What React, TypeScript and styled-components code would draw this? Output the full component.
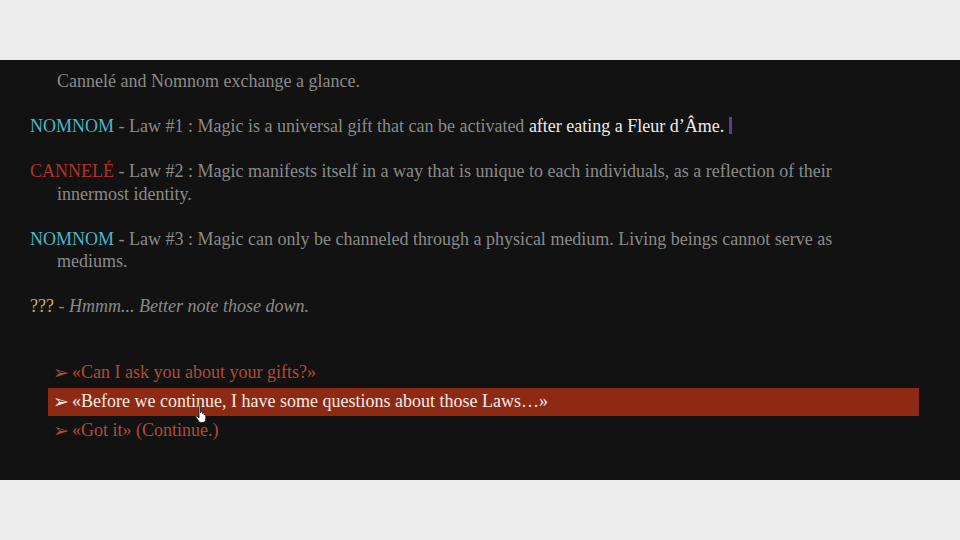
import React from 'react'
import styled, { createGlobalStyle } from 'styled-components'

const GlobalStyle = createGlobalStyle`
  html, body {
    margin: 0;
    padding: 0;
    background: #ececec;
  }
  body {
    font-family: "Liberation Serif", "DejaVu Serif", serif;
  }
`

const Stage = styled.div`
  margin-top: 60px;
  height: 420px;
  background: #121212;
  position: relative;
  overflow: hidden;
`

const Transcript = styled.div`
  padding: 10px 0 0 30px;
  width: 830px;
  font-size: 18px;
  line-height: 22.5px;
  color: #8a8a8a;
`

const Para = styled.p<{ $narration?: boolean }>`
  margin: 0 0 22.5px 0;
  padding-left: 27px;
  text-indent: ${(p) => (p.$narration ? '0' : '-27px')};
`

const Speaker = styled.span<{ $color: string }>`
  color: ${(p) => p.$color};
`

const Fresh = styled.span`
  color: #ececec;
`

const Caret = styled.span`
  display: inline-block;
  width: 3px;
  height: 17px;
  margin-left: 5px;
  vertical-align: -2px;
  background: #5f3a8e;
`

const Aside = styled.em`
  font-style: italic;
`

const Choices = styled.ul`
  list-style: none;
  margin: 41px 0 0 48px;
  padding: 0;
  width: 871px;
  display: flex;
  flex-direction: column;
  gap: 1px;
`

const Choice = styled.li<{ $active?: boolean }>`
  height: 28px;
  display: flex;
  align-items: center;
  padding-left: 5px;
  font-size: 18px;
  color: ${(p) => (p.$active ? '#f3ece6' : '#b04c36')};
  background: ${(p) => (p.$active ? '#8e2a14' : 'transparent')};
`

const Arrow = styled.span`
  font-family: "DejaVu Sans", sans-serif;
  font-size: 19px;
  line-height: 1;
  width: 19px;
`

const Pointer = styled.svg`
  position: absolute;
  left: 195px;
  top: 344px;
`

const dialogue = [
  { speaker: 'NOMNOM', color: '#4db6c6', text: ' - Law #1 : Magic is a universal gift that can be activated ', fresh: 'after eating a Fleur d\u02bcÂme.' },
  { speaker: 'CANNELÉ', color: '#b3302c', text: ' - Law #2 : Magic manifests itself in a way that is unique to each individuals, as a reflection of their innermost identity.' },
  { speaker: 'NOMNOM', color: '#4db6c6', text: ' - Law #3 : Magic can only be channeled through a physical medium. Living beings cannot serve as mediums.' },
]

const options = [
  { label: '«Can I ask you about your gifts?»' },
  { label: '«Before we continue, I have some questions about those Laws…»', active: true },
  { label: '«Got it» (Continue.)' },
]

const App: React.FC = () => {
  return (
    <>
      <GlobalStyle />
      <Stage>
        <Transcript>
          <Para $narration>Cannelé and Nomnom exchange a glance.</Para>
          {dialogue.map((line, i) => (
            <Para key={i}>
              <Speaker $color={line.color}>{line.speaker}</Speaker>
              {line.text}
              {line.fresh && (
                <>
                  <Fresh>{line.fresh}</Fresh>
                  <Caret />
                </>
              )}
            </Para>
          ))}
          <Para>
            <Speaker $color="#d2ae4e">???</Speaker> - <Aside>Hmmm... Better note those down.</Aside>
          </Para>
        </Transcript>
        <Choices>
          {options.map((o) => (
            <Choice key={o.label} $active={o.active}>
              <Arrow>➢</Arrow>
              {o.label}
            </Choice>
          ))}
        </Choices>
        <Pointer width="14" height="20" viewBox="0 0 14 20">
          <path
            d="M4 1.5c0-.8 1.6-.8 1.6 0V9l.4-1.2c0-.8 1.6-.8 1.6 0V9.5c0-.8 1.6-.8 1.6 0v1.5c0-.8 1.6-.8 1.6 0V15c0 2-1.4 3.5-3.4 3.5H6.2c-1.3 0-2-.6-2.7-1.6L1 13.2c-.5-.8.6-1.6 1.3-.9L4 14V1.5z"
            fill="#ffffff"
            stroke="#1a1a1a"
            strokeWidth="0.9"
            strokeLinejoin="round"
          />
        </Pointer>
      </Stage>
    </>
  )
}

export default App
